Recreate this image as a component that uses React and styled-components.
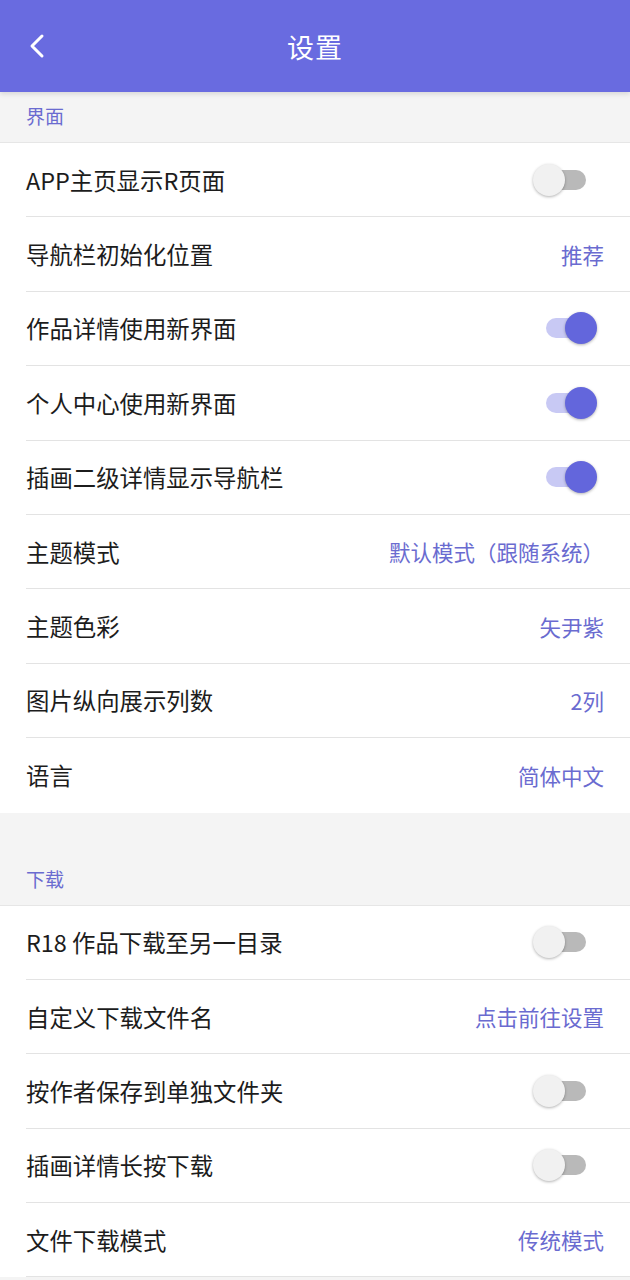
import React from 'react';
import styled, { createGlobalStyle } from 'styled-components';

const GlobalStyle = createGlobalStyle`
  html, body {
    margin: 0;
    padding: 0;
    background: #f4f4f4;
    font-family: "Noto Sans CJK SC", "Noto Sans", Roboto, sans-serif;
  }
`

const sections = [
  {
    title: '界面',
    spaced: false,
    items: [
      { label: 'APP主页显示R页面', toggle: false },
      { label: '导航栏初始化位置', value: '推荐' },
      { label: '作品详情使用新界面', toggle: true },
      { label: '个人中心使用新界面', toggle: true },
      { label: '插画二级详情显示导航栏', toggle: true },
      { label: '主题模式', value: '默认模式（跟随系统）' },
      { label: '主题色彩', value: '矢尹紫' },
      { label: '图片纵向展示列数', value: '2列' },
      { label: '语言', value: '简体中文', last: true },
    ],
  },
  {
    title: '下载',
    spaced: true,
    items: [
      { label: 'R18 作品下载至另一目录', toggle: false },
      { label: '自定义下载文件名', value: '点击前往设置' },
      { label: '按作者保存到单独文件夹', toggle: false },
      { label: '插画详情长按下载', toggle: false },
      { label: '文件下载模式', value: '传统模式' },
    ],
  },
]

export default function App() {
  return (
    <React.Fragment>
      <GlobalStyle />
      <Page>
        <TopBar>
          <BackButton>
            <svg width="22" height="26" viewBox="0 0 22 26" fill="none">
              <path d="M15 3 L5 13 L15 23" stroke="#fff" strokeWidth="3" strokeLinecap="round" strokeLinejoin="round" />
            </svg>
          </BackButton>
          <Title>设置</Title>
        </TopBar>
        {sections.map(section => (
          <Section key={section.title}>
            <SectionHeader spaced={section.spaced}>{section.title}</SectionHeader>
            <List>
              {section.items.map(item => (
                <Row key={item.label} last={item.last}>
                  <Label>{item.label}</Label>
                  {item.value !== undefined
                    ? <Value>{item.value}</Value>
                    : <Switch on={item.toggle}><Thumb on={item.toggle} /></Switch>}
                </Row>
              ))}
            </List>
          </Section>
        ))}
      </Page>
    </React.Fragment>
  )
}

const Page = styled.div`
  width: 630px;
  min-height: 1280px;
  background: #f4f4f4;
`

const TopBar = styled.div`
  position: relative;
  z-index: 1;
  height: 92px;
  background: #696be0;
  display: flex;
  align-items: center;
  justify-content: center;
  box-shadow: 0 2px 5px rgba(0, 0, 0, 0.12);
`

const BackButton = styled.div`
  position: absolute;
  left: 27px;
  top: 33px;
  display: flex;
`

const Title = styled.h1`
  margin: 0;
  font-size: 27px;
  font-weight: 400;
  color: #ffffff;
  letter-spacing: 1px;
`

const Section = styled.div`
  display: flex;
  flex-direction: column;
`

const SectionHeader = styled.div`
  height: 51px;
  margin-top: ${props => (props.spaced ? '42px' : '0')};
  padding-left: 26px;
  padding-bottom: 3px;
  display: flex;
  align-items: center;
  font-size: 19px;
  color: #6a6bd0;
  background: #f4f4f4;
  border-bottom: 1px solid #e6e6e6;
  box-sizing: border-box;
`

const List = styled.div`
  background: #ffffff;
  padding-left: 26px;
`

const Row = styled.div`
  height: 74.4px;
  box-sizing: border-box;
  display: flex;
  align-items: center;
  justify-content: space-between;
  padding-right: 26px;
  border-bottom: ${props => (props.last ? 'none' : '1px solid #e3e3e3')};
`

const Label = styled.span`
  font-size: 23.4px;
  color: #1c1c1c;
`

const Value = styled.span`
  font-size: 21.5px;
  color: #6a6bd0;
`

const Switch = styled.div`
  position: relative;
  width: 40px;
  height: 20px;
  margin-right: 18px;
  border-radius: 10px;
  background: ${props => (props.on ? '#c8c9f4' : '#b9b9b9')};
`

const Thumb = styled.div`
  position: absolute;
  top: -6px;
  left: ${props => (props.on ? '19px' : '-13px')};
  width: 32px;
  height: 32px;
  border-radius: 50%;
  background: ${props => (props.on ? '#6366dc' : '#f1f1f1')};
  box-shadow: 0 1px 3px rgba(0, 0, 0, 0.3);
`
